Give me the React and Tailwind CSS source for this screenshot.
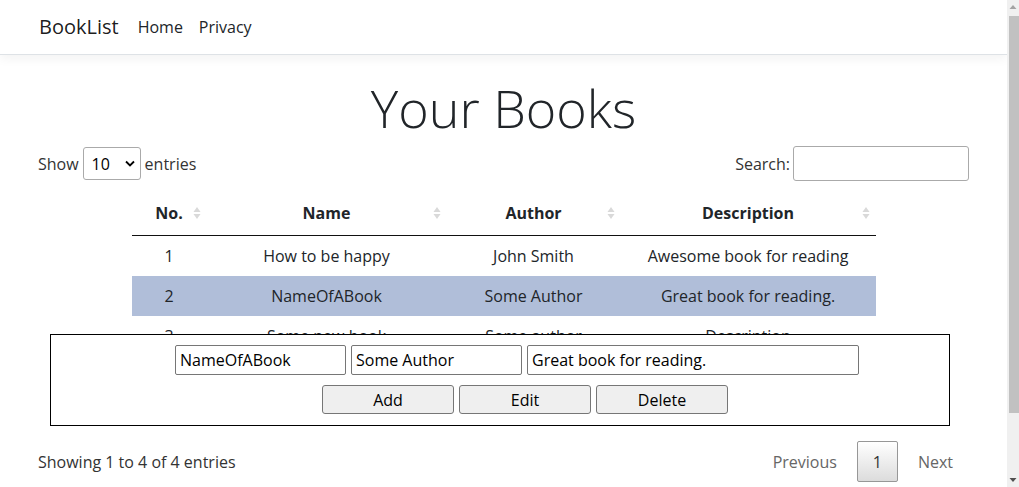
import React from "react";

const rows = [
  { no: 1, name: "How to be happy", author: "John Smith", desc: "Awesome book for reading" },
  { no: 2, name: "NameOfABook", author: "Some Author", desc: "Great book for reading.", selected: true },
  { no: 3, name: "Some new book", author: "Some author", desc: "Description" },
  { no: 4, name: "Another book", author: "Writer", desc: "Description" },
];

const SortIcon = () => (
  <svg width="8" height="14" viewBox="0 0 8 14" className="absolute right-[6px] top-1/2 -translate-y-1/2">
    <path d="M4 1 L7.5 6 L0.5 6 Z" fill="#d9d9d9" />
    <path d="M4 13 L7.5 8 L0.5 8 Z" fill="#d9d9d9" />
  </svg>
);

const Th = ({ children, w }) => (
  <div className={`relative flex items-center justify-center h-[44px] font-bold ${w}`}>
    {children}
    <SortIcon />
  </div>
);

export default function App() {
  return (
    <div className="relative flex h-[487px] w-[1019px] overflow-hidden bg-white text-[16px] text-[#212529] font-['Segoe_UI','Open_Sans',sans-serif]">
      <div className="w-[1007px] flex flex-col">
        {/* navbar */}
        <nav className="h-[55px] shrink-0 flex items-center pl-[39px] border-b border-[#dee2e6] shadow-[0_4px_10px_rgba(0,0,0,0.05)] bg-white">
          <span className="text-[20px] text-black/90 mr-[19px]">BookList</span>
          <span className="text-[#212529] mr-[16px]">Home</span>
          <span className="text-[#212529]">Privacy</span>
        </nav>

        <main className="px-[38px] flex flex-col">
          <h1 className="text-center text-[52px] font-light leading-[67px] mt-[19px] text-[#212529]">Your Books</h1>

          {/* controls */}
          <div className="flex justify-between items-center mt-[5px] text-[#333]">
            <div className="flex items-center gap-[4px]">
              <span>Show</span>
              <div className="w-[58px] h-[33px] border border-[#aaa] rounded-[3px] flex items-center justify-between pl-[8px] pr-[5px] text-black">
                <span>10</span>
                <svg width="10" height="7" viewBox="0 0 10 7">
                  <path d="M1 1.5 L5 5.5 L9 1.5" stroke="#000" strokeWidth="1.8" fill="none" />
                </svg>
              </div>
              <span>entries</span>
            </div>
            <div className="flex items-center gap-[3px]">
              <span>Search:</span>
              <div className="w-[176px] h-[35px] border border-[#aaa] rounded-[3px]" />
            </div>
          </div>

          {/* table */}
          <div className="w-[744px] mx-auto mt-[10px]">
            <div className="flex border-b border-[#111]">
              <Th w="w-[75px]">No.</Th>
              <Th w="w-[240px]">Name</Th>
              <Th w="w-[174px]">Author</Th>
              <Th w="w-[255px]">Description</Th>
            </div>
            {rows.map((r) => (
              <div key={r.no} className={`flex h-[40px] items-center text-center ${r.selected ? "bg-[#b0bed9]" : ""}`}>
                <div className="w-[75px]">{r.no}</div>
                <div className="w-[240px]">{r.name}</div>
                <div className="w-[174px]">{r.author}</div>
                <div className="w-[255px]">{r.desc}</div>
              </div>
            ))}
          </div>

          {/* info + paging */}
          <div className="flex justify-between items-center mt-[45px] text-[#333]">
            <span>Showing 1 to 4 of 4 entries</span>
            <div className="flex items-center">
              <span className="px-[16px] text-[#666]">Previous</span>
              <span className="mx-[4px] w-[41px] h-[41px] flex items-center justify-center border border-[#979797] rounded-[2px] bg-gradient-to-b from-white to-[#dcdcdc] text-[#333]">1</span>
              <span className="px-[16px] text-[#666]">Next</span>
            </div>
          </div>
        </main>
      </div>

      {/* scrollbar */}
      <div className="w-[12px] h-full bg-[#f0f0f0] flex flex-col items-center">
        <svg width="8" height="16" viewBox="0 0 8 16" className="shrink-0">
          <path d="M4 5 L7.5 9 L0.5 9 Z" fill="#a3a3a3" />
        </svg>
        <div className="w-[10px] ml-[2px] h-[397px] bg-[#c1c1c1]" />
        <div className="flex-1" />
        <svg width="8" height="16" viewBox="0 0 8 16" className="shrink-0">
          <path d="M4 11 L7.5 7 L0.5 7 Z" fill="#505050" />
        </svg>
      </div>

      {/* edit overlay */}
      <div className="absolute left-[50px] top-[334px] w-[900px] h-[92px] border border-black bg-white flex flex-col items-center pt-[10px] gap-[10px]">
        <div className="flex gap-[5px] pl-[34px]">
          <input readOnly value="NameOfABook" className="w-[171px] h-[30px] border border-[#767676] rounded-[2px] px-[4px] text-black outline-none" />
          <input readOnly value="Some Author" className="w-[171px] h-[30px] border border-[#767676] rounded-[2px] px-[4px] text-black outline-none" />
          <input readOnly value="Great book for reading." className="w-[332px] h-[30px] border border-[#767676] rounded-[2px] px-[4px] text-black outline-none" />
        </div>
        <div className="flex gap-[5px] pl-[50px]">
          <button className="w-[132px] h-[29px] bg-[#efefef] border border-[#767676] rounded-[3px] text-black">Add</button>
          <button className="w-[132px] h-[29px] bg-[#efefef] border border-[#767676] rounded-[3px] text-black">Edit</button>
          <button className="w-[132px] h-[29px] bg-[#efefef] border border-[#767676] rounded-[3px] text-black">Delete</button>
        </div>
      </div>
    </div>
  );
}
